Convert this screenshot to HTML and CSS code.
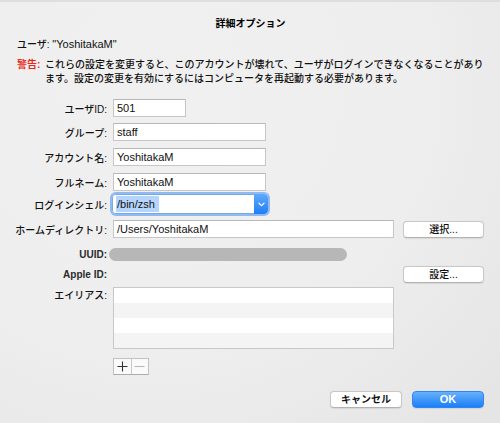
FILE: index.html
```html
<!DOCTYPE html>
<html lang="ja">
<head>
<meta charset="utf-8">
<title>詳細オプション</title>
<link rel="stylesheet" href="styles.css">
</head>
<body>
<div class="sheet">
  <div class="title">詳細オプション</div>
  <div class="user">ユーザ: <span class="latin">"YoshitakaM"</span></div>
  <div class="warning">
    <span class="warn-label">警告:</span>
    <p class="warn-text">これらの設定を変更すると、このアカウントが壊れて、ユーザがログインできなくなることがあります。設定の変更を有効にするにはコンピュータを再起動する必要があります。</p>
  </div>

  <div class="form">
    <div class="row">
      <label class="lbl">ユーザID:</label>
      <div class="field w-short">501</div>
    </div>
    <div class="row gap-6">
      <label class="lbl">グループ:</label>
      <div class="field w-mid">staff</div>
    </div>
    <div class="row">
      <label class="lbl">アカウント名:</label>
      <div class="field w-mid">YoshitakaM</div>
    </div>
    <div class="row">
      <label class="lbl">フルネーム:</label>
      <div class="field w-mid">YoshitakaM</div>
    </div>
    <div class="row gap-3 row-combo">
      <label class="lbl">ログインシェル:</label>
      <div class="combo">
        <div class="combo-text"><span class="sel">/bin/zsh</span></div>
        <div class="combo-btn">
          <svg width="7" height="5" viewBox="0 0 7 5"><path d="M1 1.2 L3.5 3.6 L6 1.2" fill="none" stroke="#fff" stroke-width="1.2" stroke-linecap="round" stroke-linejoin="round"/></svg>
        </div>
      </div>
    </div>
    <div class="row gap-6">
      <label class="lbl">ホームディレクトリ:</label>
      <div class="field w-full">/Users/YoshitakaM</div>
      <button class="btn side">選択...</button>
    </div>
    <div class="row gap-10 row-uuid">
      <label class="lbl latin-lbl">UUID:</label>
      <div class="uuid"></div>
    </div>
    <div class="row gap-5 row-apple">
      <label class="lbl latin-lbl">Apple ID:</label>
      <div></div>
      <button class="btn side">設定...</button>
    </div>
    <div class="row gap-4 row-list">
      <label class="lbl lbl-top">エイリアス:</label>
      <div class="list">
        <div class="list-row"></div>
        <div class="list-row alt"></div>
        <div class="list-row"></div>
        <div class="list-row alt"></div>
      </div>
    </div>
    <div class="row gap-9 row-pm">
      <div></div>
      <div class="pm">
        <span class="pm-btn">
          <svg width="11" height="11" viewBox="0 0 11 11"><path d="M5.5 0.5 V10.5 M0.5 5.5 H10.5" stroke="#333" stroke-width="1.1"/></svg>
        </span>
        <span class="pm-btn disabled">
          <svg width="11" height="11" viewBox="0 0 11 11"><path d="M0.5 5.5 H10.5" stroke="#b8b8b8" stroke-width="1.1"/></svg>
        </span>
      </div>
    </div>
  </div>

  <div class="actions">
    <button class="btn cancel">キャンセル</button>
    <button class="btn ok">OK</button>
  </div>
</div>
</body>
</html>
```

FILE: styles.css
```css
html, body {
  margin: 0;
  padding: 0;
}

body {
  width: 500px;
  height: 423px;
  overflow: hidden;
  background: radial-gradient(ellipse at 30% 20%, #f0f0f0 0%, #eeeeee 55%, #e4e4e4 100%);
  font-family: "Liberation Sans", "Noto Sans CJK JP", sans-serif;
  font-size: 10px;
  font-weight: 500;
  color: #111;
}

.sheet {
  box-sizing: border-box;
  height: 423px;
  border-top: 2px solid #dedede;
  padding: 15px 16px 0 17px;
  position: relative;
}

.title {
  text-align: center;
  font-weight: bold;
  line-height: 14px;
  color: #000;
}

.user {
  margin-top: 6px;
  line-height: 14px;
}

.latin {
  font-size: 11px;
  font-weight: normal;
}

.warning {
  display: flex;
  margin-top: 6px;
  line-height: 14px;
}

.warn-label {
  color: #e8291c;
  font-weight: bold;
  width: 28px;
  flex: none;
}

.warn-text {
  margin: 0;
  width: 440px;
}

.form {
  margin-top: 13px;
  margin-left: -17px;
  display: flex;
  flex-direction: column;
}

.row {
  display: grid;
  grid-template-columns: 113px 281px 90px;
  align-items: center;
  height: 18px;
  margin-top: 7px;
}

.row:first-child {
  margin-top: 0;
}

.gap-3 { margin-top: 3px; }
.gap-4 { margin-top: 4px; }
.gap-5 { margin-top: 5px; }
.gap-6 { margin-top: 6px; }
.gap-9 { margin-top: 9px; }
.gap-10 { margin-top: 10px; }

.row-combo { height: 20px; }
.row-uuid { height: 13px; }
.row-apple { height: 17px; }
.row-list { height: 62px; align-items: start; }
.row-pm { height: 17px; }

.lbl {
  text-align: right;
  padding-right: 6px;
  white-space: nowrap;
  color: #111;
}

.lbl-top {
  line-height: 18px;
}

.latin-lbl {
  font-weight: bold;
  color: #2a2a2a;
}

.field {
  box-sizing: border-box;
  height: 18px;
  background: #fff;
  border: 1px solid #c6c6c6;
  border-top-color: #b8b8b8;
  font-size: 11px;
  font-weight: normal;
  line-height: 16px;
  padding-left: 3px;
  color: #111;
}

.w-short { width: 73px; }
.w-mid { width: 153px; }
.w-full { width: 281px; }

.combo {
  box-sizing: border-box;
  margin-left: -1px;
  width: 156px;
  height: 20px;
  display: flex;
  border-radius: 4px;
  box-shadow: 0 0 0 2px #8fb9f3;
  background: #fff;
  overflow: hidden;
}

.combo-text {
  flex: 1;
  padding: 1px 0 0 3px;
  font-size: 11px;
  font-weight: normal;
  line-height: 16px;
  border: 1px solid #7aa8ea;
  border-right: none;
  border-radius: 3px 0 0 3px;
}

.sel {
  display: inline-block;
  background: #b5d5fd;
  padding: 0 4px 0 1px;
  line-height: 16px;
  color: #111;
}

.combo-btn {
  width: 14px;
  display: flex;
  align-items: center;
  justify-content: center;
  background: linear-gradient(#5eaafc, #1f7ef5);
  border-radius: 0 3px 3px 0;
}

.btn {
  box-sizing: border-box;
  font-family: "Liberation Sans", "Noto Sans CJK JP", sans-serif;
  font-size: 10px;
  font-weight: 500;
  color: #111;
  background: #fff;
  border: 1px solid #c8c8c8;
  border-bottom-color: #b2b2b2;
  border-radius: 4px;
  height: 17px;
  padding: 0;
  line-height: 15px;
  box-shadow: 0 0.5px 1px rgba(0,0,0,0.08);
}

.side {
  width: 81px;
  justify-self: end;
}

.uuid {
  margin-left: -4px;
  width: 238px;
  height: 13px;
  border-radius: 7px;
  background: #b7b7b7;
}

.list {
  box-sizing: border-box;
  width: 281px;
  height: 62px;
  border: 1px solid #c8c8c8;
  background: #f4f4f4;
}

.list-row {
  height: 15px;
  background: #fff;
}

.list-row.alt {
  background: #f4f4f4;
}

.pm {
  display: flex;
  width: 36px;
  height: 17px;
  box-sizing: border-box;
  border: 1px solid #c2c2c2;
  border-bottom-color: #acacac;
  background: #fafafa;
}

.pm-btn {
  flex: 1;
  display: flex;
  align-items: center;
  justify-content: center;
}

.pm-btn + .pm-btn {
  border-left: 1px solid #c8c8c8;
}

.actions {
  position: absolute;
  right: 16px;
  top: 389px;
  display: flex;
  gap: 10px;
}

.cancel {
  width: 72px;
  font-weight: bold;
}

.ok {
  width: 72px;
  color: #fff;
  font-weight: bold;
  font-size: 11px;
  border: 1px solid #2e86f6;
  background: linear-gradient(#69b0fb, #1a7ff7);
}
```
